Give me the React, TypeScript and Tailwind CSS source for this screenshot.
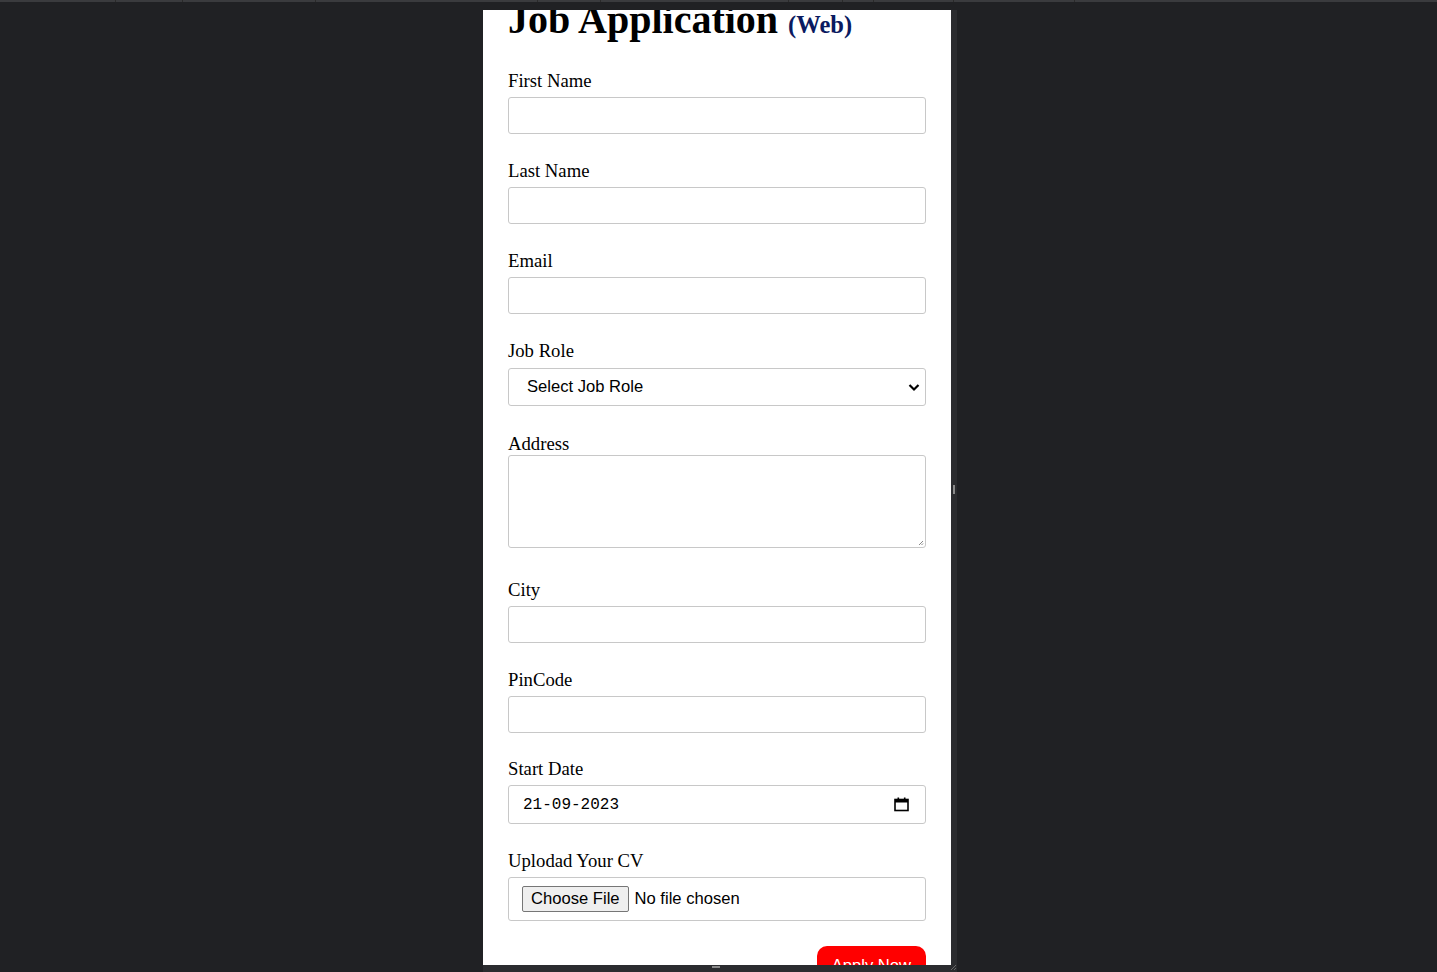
import React from "react";

const serif = { fontFamily: '"Liberation Serif", "Times New Roman", serif' };

function Label({ text, cls }: { text: string; cls: string }) {
  return (
    <div
      className={`text-[18.7px] leading-[22px] text-black ${cls}`}
      style={serif}
    >
      {text}
    </div>
  );
}

function Box({ cls }: { cls: string }) {
  return (
    <div
      className={`w-[418px] border border-[#c8c8c8] rounded-[3px] bg-white ${cls}`}
    />
  );
}

export default function App() {
  const sans = 'font-["Liberation_Sans",Arial,sans-serif]';
  return (
    <div className="w-[1437px] h-[972px] bg-[#202124] overflow-hidden flex flex-col">
      {/* top strip */}
      <div className="h-[2px] bg-[#3a3b3e] flex">
        <div className="w-[115px]" />
        <div className="w-px bg-[#2a2a2a]" />
        <div className="w-[66px]" />
        <div className="w-px bg-[#2a2a2a]" />
        <div className="w-[132px]" />
        <div className="w-px bg-[#2a2a2a]" />
        <div className="w-[221px]" />
        <div className="w-px bg-[#2a2a2a]" />
        <div className="w-[62px]" />
        <div className="w-px bg-[#2a2a2a]" />
        <div className="w-[187px]" />
        <div className="w-px bg-[#2a2a2a]" />
        <div className="w-[53px]" />
        <div className="w-px bg-[#2a2a2a]" />
        <div className="w-[30px]" />
        <div className="w-px bg-[#2a2a2a]" />
        <div className="w-[79px]" />
        <div className="w-px bg-[#2a2a2a]" />
        <div className="w-[120px]" />
        <div className="w-px bg-[#2a2a2a]" />
      </div>

      <div className="ml-[483px] mt-[8px] flex flex-col">
        <div className="flex">
          {/* viewport panel */}
          <div className="w-[468px] h-[955px] bg-white overflow-hidden">
            <div className="pl-[25px] flex flex-col">
              <h1
                className="mt-[-13px] h-[46px] text-[40px] leading-[46px] font-bold text-black whitespace-nowrap"
                style={serif}
              >
                Job Application{" "}
                <span className="text-[24.5px] text-[#0a1a60]">(Web)</span>
              </h1>

              <Label text="First Name" cls="mt-[27px]" />
              <Box cls="mt-[5px] h-[37px]" />

              <Label text="Last Name" cls="mt-[26px]" />
              <Box cls="mt-[5px] h-[37px]" />

              <Label text="Email" cls="mt-[26px]" />
              <Box cls="mt-[5px] h-[37px]" />

              <Label text="Job Role" cls="mt-[26px]" />
              <div className="mt-[6px] w-[418px] h-[38px] border border-[#c8c8c8] rounded-[3px] flex items-center justify-between pl-[18px] pr-[4px]">
                <span className={`text-[16.6px] text-black ${sans}`}>
                  Select Job Role
                </span>
                <svg width="14" height="14" viewBox="0 0 14 14">
                  <path
                    d="M2.5 5 L7 9.5 L11.5 5"
                    fill="none"
                    stroke="#000"
                    strokeWidth="2.2"
                  />
                </svg>
              </div>

              <Label text="Address" cls="mt-[27px] leading-[20px]" />
              <div className="w-[418px] h-[93px] border border-[#c8c8c8] rounded-[3px] flex items-end justify-end p-[1px]">
                <svg width="6" height="6" viewBox="0 0 6 6">
                  <path d="M5 1 L1 5 M5 3.5 L3.5 5" stroke="#888" strokeWidth="1" />
                </svg>
              </div>

              <Label text="City" cls="mt-[31px]" />
              <Box cls="mt-[5px] h-[37px]" />

              <Label text="PinCode" cls="mt-[26px]" />
              <Box cls="mt-[5px] h-[37px]" />

              <Label text="Start Date" cls="mt-[25px]" />
              <div className="mt-[5px] w-[418px] h-[39px] border border-[#c8c8c8] rounded-[3px] flex items-center justify-between pl-[14px] pr-[16px]">
                <span className='text-[16px] text-black font-["Liberation_Mono",monospace]'>
                  21-09-2023
                </span>
                <svg width="15" height="15" viewBox="0 0 15 15">
                  <rect x="1" y="2.5" width="13" height="11" fill="none" stroke="#000" strokeWidth="1.6" />
                  <rect x="1" y="2.5" width="13" height="3" fill="#000" />
                  <rect x="3.5" y="0.5" width="1.6" height="2.5" fill="#000" />
                  <rect x="9.9" y="0.5" width="1.6" height="2.5" fill="#000" />
                </svg>
              </div>

              <Label text="Uplodad Your CV" cls="mt-[26px]" />
              <div className="mt-[5px] w-[418px] h-[44px] border border-[#c8c8c8] rounded-[3px] flex items-center pl-[13px]">
                <div
                  className={`h-[26px] px-[8px] bg-[#efefef] border border-[#767676] rounded-[2px] flex items-center text-[16.6px] text-black ${sans}`}
                >
                  Choose File
                </div>
                <span className={`ml-[6px] text-[16.6px] text-black ${sans}`}>
                  No file chosen
                </span>
              </div>

              <div className="mt-[25px] w-[418px] flex justify-end">
                <div
                  className={`h-[42px] px-[15px] pt-[10px] bg-[#ff0000] rounded-[10px] text-white text-[16.6px] leading-[20px] ${sans}`}
                >
                  Apply Now
                </div>
              </div>
            </div>
          </div>
          {/* right resize strip */}
          <div className="w-[6px] h-[955px] bg-[#2b2c2f] flex items-center justify-center">
            <div className="w-[2px] h-[9px] bg-[#8a8a8a] mb-[-3px]" />
          </div>
        </div>
        {/* bottom resize strip */}
        <div className="w-[474px] h-[7px] bg-[#2b2c2f] flex items-start">
          <div className="ml-[229px] mt-[1px] w-[8px] h-[2px] bg-[#8a8a8a]" />
          <div className="ml-auto w-[6px] h-[6px] flex items-end justify-end">
            <svg width="6" height="6" viewBox="0 0 6 6">
              <path d="M5 0 L0 5 M5 3 L3 5" stroke="#666" strokeWidth="1" />
            </svg>
          </div>
        </div>
      </div>
    </div>
  );
}
